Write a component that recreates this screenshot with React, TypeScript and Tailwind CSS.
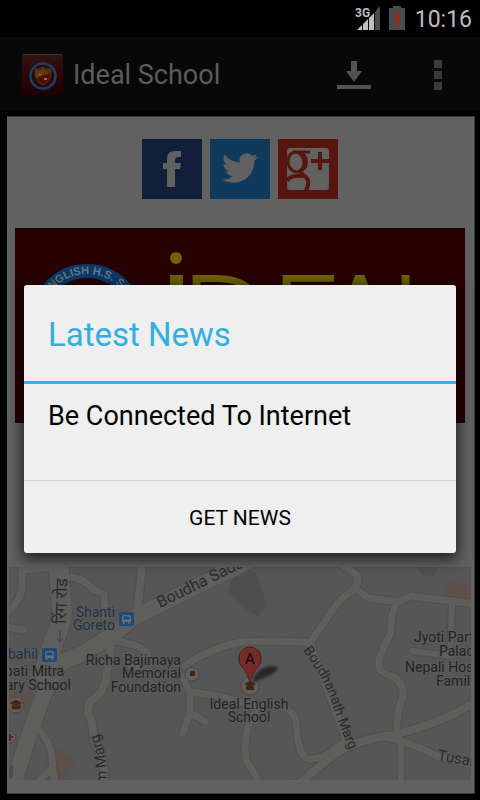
import React from "react";

const ROADS: { d: string; w: number }[] = [
  { d: "M22 560V588Q20 602 6 614", w: 8 },
  { d: "M26 570L48 568", w: 8 },
  { d: "M72 577Q86 580 94 590L104 594L106 628", w: 8 },
  { d: "M143 560L137 612", w: 9 },
  { d: "M6 627L24 630", w: 8 },
  { d: "M112 640L107 670Q106 692 92 700Q84 708 92 722L94 740Q106 760 104 786", w: 9 },
  { d: "M112 640L134 645Q152 652 146 660L132 668", w: 8 },
  { d: "M310 643Q290 640 240 642Q206 650 184 666", w: 8 },
  { d: "M182 676L190 692Q225 696 246 704L276 706Q294 708 296 722Q298 762 312 759Q326 758 346 740", w: 8 },
  { d: "M190 692V712L183 734M190 713L205 721", w: 8 },
  { d: "M257 710Q242 728 246 760L262 786", w: 8 },
  { d: "M296 786L330 758Q352 740 393 735Q440 724 476 702", w: 9 },
  { d: "M385 737Q410 742 437 756L476 766", w: 8 },
  { d: "M401 744V786", w: 7 },
  { d: "M338 562L357 575Q360 582 352 591Q338 600 330 614L310 643L346 740", w: 8 },
  { d: "M355 588L368 598L398 602L411 596L476 604", w: 8 },
  { d: "M398 602Q390 612 391 632L380 656Q374 672 392 676Q404 682 403 696Q396 712 397 734", w: 8 },
  { d: "M452 602L450 656L412 651", w: 7 },
  { d: "M32 722Q50 740 52 756Q52 770 56 786M52 768L34 786", w: 8 },
  { d: "M58 560L62 610Q62 622 54 640L44 672", w: 21 },
  { d: "M250 560L133 618Q96 650 62 662Q44 680 12 790", w: 17 },
];

const LABELS: { x: number; y: number; t: string; c?: string; a?: "end" | "middle" }[] = [
  { x: 115, y: 617, t: "Shanti", c: "#1b3046", a: "end" },
  { x: 115, y: 630, t: "Goreto", c: "#1b3046", a: "end" },
  { x: 38, y: 659, t: "bahil", c: "#1b3046", a: "end" },
  { x: 64, y: 676, t: "pati Mitra", a: "end" },
  { x: 71, y: 690, t: "ary School", a: "end" },
  { x: 181, y: 665, t: "Richa Bajimaya", a: "end" },
  { x: 181, y: 678, t: "Memorial", a: "end" },
  { x: 181, y: 692, t: "Foundation", a: "end" },
  { x: 249, y: 709, t: "Ideal English", a: "middle" },
  { x: 249, y: 722, t: "School", a: "middle" },
  { x: 414, y: 642, t: "Jyoti Part" },
  { x: 439, y: 656, t: "Palac" },
  { x: 405, y: 672, t: "Nepali Hos" },
  { x: 436, y: 686, t: "Family" },
];

function BusStop({ x, y }: { x: number; y: number }) {
  return (
    <g transform={`translate(${x} ${y})`}>
      <rect width="15" height="14" rx="2" fill="#1d4a76" />
      <path d="M3 10V5Q3 3 5 3H10Q12 3 12 5V10H11V12H9.500V10H5.500V12H4V10Z" fill="#66707a" />
      <rect x="4.500" y="4.500" width="6" height="3" fill="#1d4a76" />
    </g>
  );
}

function MapView() {
  return (
    <svg
      viewBox="9 567 462 213"
      preserveAspectRatio="xMidYMid slice"
      className="h-[213px] w-full bg-[#565656] font-['Roboto','Noto_Sans',sans-serif]"
      role="img"
      aria-label="School location map"
    >
      <defs>
        <path id="sadak" d="M160 608L260 559" />
        <path id="boudhanath" d="M303 650Q326 682 333 706Q340 728 352 756" />
        <path id="marg" d="M106 784Q109 756 96 728" />
        <filter id="soft">
          <feGaussianBlur stdDeviation="1.5" />
        </filter>
      </defs>
      <path d="M236 568L256 572L267 606L258 616L246 610L228 592ZM415 567H438L434 576H424Z" fill="#4f4f4f" />
      <path d="M447 580L471 586V601L443 597ZM55 747L76 760L64 780H56ZM9 694L32 690L28 712L9 700Z" fill="#5d514a" />
      <path d="M238 686L260 684L256 706L234 708Z" fill="#5d544b" />
      <g fill="none" stroke="#534e49" strokeLinecap="round" strokeLinejoin="round">
        {ROADS.map((r) => (
          <path key={r.d} d={r.d} strokeWidth={r.w + 1} />
        ))}
      </g>
      <g fill="none" stroke="#5e5e5d" strokeLinecap="round" strokeLinejoin="round">
        {ROADS.map((r) => (
          <path key={r.d} d={r.d} strokeWidth={r.w - 1} />
        ))}
      </g>
      <path d="M60 641V630M57 638L60 642L63 638" fill="none" stroke="#3a3f48" />
      <BusStop x={119} y={612} />
      <BusStop x={42} y={648} />
      <circle cx="192" cy="674" r="7" fill="#5f5f5f" stroke="#484848" />
      <rect x="190" y="671" width="5" height="5" fill="#46250f" />
      <circle cx="16" cy="705" r="8" fill="#5f5f5f" stroke="#484848" />
      <path d="M10 703L16 700L22 703L16 706ZM12 705L16 707L20 705V709H12ZM21 704V708" fill="#46250f" stroke="#46250f" strokeWidth="0.5" />
      <circle cx="10" cy="737" r="6" fill="#5f5f5f" stroke="#484848" />
      <path d="M8 737H13M10 734V741" stroke="#5a2020" strokeWidth="2" />
      <path d="M9 768L13 764V778H9Z" fill="#494d59" />

      <g fontSize="14" fill="#222">
        {LABELS.map((l) => (
          <text key={l.t + l.y} x={l.x} y={l.y} fill={l.c} textAnchor={l.a} stroke="#5b5b5b" strokeWidth="2" paintOrder="stroke">
            {l.t}
          </text>
        ))}
      </g>
      <g fill="#2b2b2b">
        <text fontSize="16">
          <textPath href="#sadak">Boudha Sadak</textPath>
        </text>
        <text fontSize="14">
          <textPath href="#boudhanath">Boudhanath Marg</textPath>
        </text>
        <text fontSize="15">
          <textPath href="#marg">m Marg</textPath>
        </text>
        <text fontSize="15" transform="translate(437 760) rotate(10)">
          Tusal
        </text>
        <text fontSize="17" transform="translate(66 624) rotate(-88)">
          रिंग रोड
        </text>
      </g>

      <circle cx="250" cy="686" r="9" fill="#5f5f5f" stroke="#484848" />
      <path d="M244 684L250 681L256 684L250 687ZM246 686H254V690H246Z" fill="#45250f" />
      <path d="M252 683Q256 666 274 666Q282 668 272 674Q262 679 252 683Z" fill="#262826" filter="url(#soft)" />
      <path
        d="M250 685Q249 675 243 668Q238 663 239 658A11 11 0 0 1 261 658Q262 663 257 668Q251 675 250 685Z"
        fill="#752b27"
        stroke="#47201e"
      />
      <text x="250" y="664" fontSize="15" textAnchor="middle" fill="#0c0505">
        A
      </text>
    </svg>
  );
}

function Banner() {
  return (
    <svg
      viewBox="15 228 450 195"
      preserveAspectRatio="xMidYMid slice"
      className="h-[195px] w-full bg-[#270000]"
      role="img"
      aria-label="Ideal School banner"
    >
      <defs>
        <path id="ring" d="M40 321A47 47 0 0 1 134 321" />
      </defs>
      <circle cx="87" cy="321" r="50" fill="none" stroke="#0b3a68" strokeWidth="14" />
      <text fontSize="11" fontWeight="700" fill="#6c7680" fontFamily="Liberation Sans">
        <textPath href="#ring" startOffset="27">
          ENGLISH H.S. SCHOOL
        </textPath>
      </text>
      <g fill="#6d6300">
        <circle cx="176" cy="258" r="6" />
        <rect x="170" y="275" width="13" height="88" />
        <text
          x="179 269 319 388"
          y="363"
          fontSize="120"
          fontWeight="200"
          fontFamily="DejaVu Sans Light, DejaVu Sans, sans-serif"
          stroke="#6d6300"
          strokeWidth="2"
        >
          DEAL
        </text>
      </g>
    </svg>
  );
}

function SchoolLogo() {
  return (
    <svg viewBox="0 0 41 41" className="size-[41px]" aria-hidden="true">
      <defs>
        <linearGradient id="tile" x1="0" y1="0" x2="0" y2="1">
          <stop offset="0" stopColor="#2f1414" />
          <stop offset="0.5" stopColor="#300505" />
          <stop offset="1" stopColor="#1c0000" />
        </linearGradient>
      </defs>
      <rect width="41" height="41" rx="1" fill="url(#tile)" />
      <path d="M1 .5H40" stroke="#4a3030" />
      <circle cx="21" cy="22" r="12.500" fill="#2a0808" stroke="#1b3f66" strokeWidth="2.500" />
      <path d="M21 13Q24 16 29 15Q30 26 21 31Q12 26 13 15Q18 16 21 13Z" fill="#520c08" stroke="#5c4010" strokeWidth="1" />
      <path d="M21 14Q24 17 28 16L27 20L14 24L14 16Q18 17 21 14Z" fill="#5f3a10" />
      <path d="M17 20H19V21H17ZM22 24H25V26H22Z" fill="#777" />
    </svg>
  );
}

export default function App() {
  return (
    <div className="relative flex min-h-screen flex-col bg-black font-['Roboto','Noto_Sans',sans-serif]">
      <div className="flex h-[38px] items-center justify-end pr-2">
        <svg viewBox="0 0 25 24" className="mb-0.5 h-6 w-[25px]" aria-label="3G signal">
          <path d="M2 24L7 19V24ZM8 24V18L13 13V24ZM14 24V12L19 7V24Z" fill="#bebebe" />
          <path d="M20 24V6L25 0V24Z" fill="#4c4c4c" />
          <text x="0" y="11" fontSize="12" fontWeight="700" fill="#bebebe" fontFamily="Roboto">
            3G
          </text>
        </svg>
        <svg viewBox="0 0 16 24" className="mr-[10px] mb-0.5 ml-[9px] h-6 w-4" aria-label="Battery low">
          <path d="M0 2H4V0H12V2H16V24H0Z" fill="#4a4a4a" />
          <path d="M7 7H10V15L9 16H8L7 15ZM7 18H10V20H7Z" fill="#c02000" />
        </svg>
        <time className="pt-0.5 text-[23px] leading-8 text-[#bebebe]">10:16</time>
      </div>

      <header className="flex h-[72px] items-center border-t border-[#0b120a] bg-[#080808] pl-[22px]">
        <SchoolLogo />
        <h1 className="flex-1 pl-[10px] text-[27px] leading-8 text-[#5c5c5c]">Ideal School</h1>
        <button type="button" aria-label="Download" className="flex h-full w-[84px] items-center justify-center">
          <svg viewBox="0 0 34 28" className="h-7 w-[34px]">
            <path d="M14 0H20V10H25L17 21L9 10H14ZM0 24H34V28H0Z" fill="#525252" />
          </svg>
        </button>
        <button type="button" aria-label="More options" className="flex h-full w-[84px] flex-col items-center justify-center gap-[3px]">
          <span className="size-2 bg-[#3a3a3a]" />
          <span className="size-2 bg-[#3a3a3a]" />
          <span className="size-2 bg-[#3a3a3a]" />
        </button>
      </header>

      <main className="mt-[6px] mr-[5px] mb-[6px] ml-[7px] flex flex-1 flex-col border-t border-r border-b border-[#3a3a3a] bg-[#616161] pt-[22px] pr-[3px] pb-[13px] pl-[2px]">
        <nav aria-label="Social links" className="flex justify-center gap-2">
          <a href="#facebook" aria-label="Facebook" className="size-[60px] bg-[#121f3a]">
            <svg viewBox="0 0 60 60">
              <path d="M25 48V30H21V24H25V20Q25 12 33 12H39V18H36Q33 18 33 21V24H39L38 30H33V48Z" fill="#616161" />
            </svg>
          </a>
          <a href="#twitter" aria-label="Twitter" className="size-[60px] bg-[#103a5c]">
            <svg viewBox="0 0 60 60">
              <g transform="translate(12 11) scale(1.5)">
                <path
                  d="M23.950 4.570a10 10 0 0 1-2.820.770 4.960 4.960 0 0 0 2.160-2.720c-.950.550-2 .950-3.130 1.180a4.920 4.920 0 0 0-8.380 4.480C7.690 8.090 4.070 6.130 1.640 3.160a4.820 4.820 0 0 0-.660 2.470c0 1.710.870 3.210 2.190 4.100a4.900 4.900 0 0 1-2.230-.620v.060a4.920 4.920 0 0 0 3.950 4.830 5 5 0 0 1-2.210.080 4.940 4.940 0 0 0 4.600 3.420A9.870 9.870 0 0 1 0 19.540a14 14 0 0 0 7.550 2.210c9.050 0 14-7.500 14-13.980 0-.210 0-.420-.020-.630a9.940 9.940 0 0 0 2.460-2.550z"
                  fill="#616161"
                />
              </g>
            </svg>
          </a>
          <a href="#google-plus" aria-label="Google Plus" className="size-[60px] bg-[#571510]">
            <svg viewBox="0 0 60 60">
              <rect x="9" y="9" width="42" height="42" rx="3" fill="#616161" />
              <g fill="none" stroke="#571510">
                <ellipse cx="18" cy="23" rx="8" ry="10" strokeWidth="3" transform="rotate(-10 18 23)" />
                <path d="M15 13H32" strokeWidth="3" />
                <path d="M24 15Q30 20 27 28Q21 32 24 35Q32 40 30 46L28 52" strokeWidth="4" />
                <path d="M9 42Q12 36 25 37" strokeWidth="4" />
                <path d="M33 22H51M42 13V31" strokeWidth="4" />
              </g>
            </svg>
          </a>
        </nav>
        <div className="mt-[29px] px-[6px]">
          <Banner />
        </div>
        <div className="mt-auto">
          <MapView />
        </div>
      </main>

      <div className="absolute inset-x-0 top-[38px] bottom-0 flex items-center justify-center px-6">
        <section
          role="dialog"
          aria-modal="true"
          aria-labelledby="dialog-title"
          className="w-full overflow-hidden rounded-[3px] bg-[#efefef] shadow-[0_4px_14px_2px_rgba(0,8,0,0.7)]"
        >
          <h2 id="dialog-title" className="flex h-[99px] items-center border-b-3 border-[#33b5e5] px-6 pt-1 text-[33px] text-[#33aedd]">
            Latest News
          </h2>
          <p className="h-24 px-6 pt-4 text-[27px] leading-8 text-black">Be Connected To Internet</p>
          <button type="button" className="h-[73px] w-full border-t border-[#d4d4d4] pt-1 text-[21px] text-black">
            GET NEWS
          </button>
        </section>
      </div>
    </div>
  );
}
